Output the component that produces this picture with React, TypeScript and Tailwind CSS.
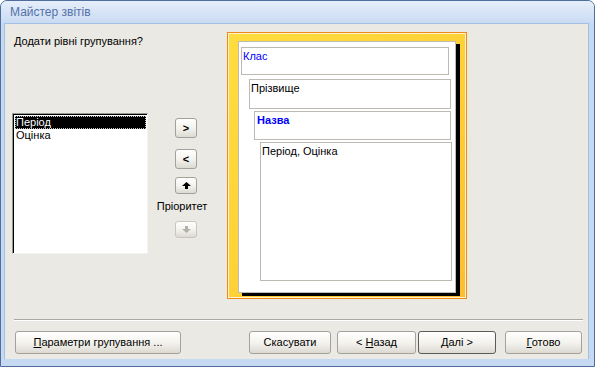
import React from "react";

function Btn({
  children,
  className = "",
  def = false,
  disabled = false,
}: {
  children: React.ReactNode;
  className?: string;
  def?: boolean;
  disabled?: boolean;
}) {
  const border = def
    ? "border-[#5c5b57]"
    : disabled
    ? "border-[#c9c6bd]"
    : "border-[#a3a19a]";
  return (
    <button
      className={`flex items-center justify-center rounded-[3px] border ${border} bg-gradient-to-b from-[#ffffff] via-[#f4f3ee] to-[#dcdad2] text-[11px] leading-none ${
        disabled ? "text-[#aca899]" : "text-black"
      } ${className}`}
    >
      {children}
    </button>
  );
}

function Arrow({ up = true, color = "#000" }: { up?: boolean; color?: string }) {
  return (
    <svg width="9" height="7" viewBox="0 0 9 7">
      <polygon
        points={up ? "4.5,0 9,4 6,4 6,7 3,7 3,4 0,4" : "3,0 6,0 6,3 9,3 4.5,7 0,3 3,3"}
        fill={color}
      />
    </svg>
  );
}

export default function App() {
  return (
    <div className="w-[595px] h-[367px] bg-[#c6d9f2] border border-[#4f6e9c] rounded-t-[7px] flex flex-col overflow-hidden font-['Liberation_Sans',Arial,sans-serif]">
      {/* title bar */}
      <div className="h-[22px] shrink-0 bg-gradient-to-b from-[#e6eefa] to-[#c9dbf3] flex items-center pl-[9px]">
        <span className="text-[12px] text-[#5472a8]">Майстер звітів</span>
      </div>

      <div className="flex-1 mx-[3px] mr-[5px] mb-[7px] bg-[#ebe9e3] border-t border-l border-r border-[#a4bfe4] flex flex-col">
        {/* main area */}
        <div className="h-[295px] flex items-start pt-[8px]">
          <div className="w-[136px] ml-[7px] flex flex-col">
            <div className="pl-[2px] mt-[3px] text-[11px] leading-[13px] text-black">
              Додати рівні групування?
            </div>
            <div className="mt-[65px] h-[141px] bg-white border border-t-[#9a9892] border-l-[#9a9892] border-r-[#f4f3ef] border-b-[#f4f3ef]">
              <div className="h-full border-t border-l border-black pt-[1px] pl-[1px] pr-[1px]">
                <div className="h-[13px] bg-black text-white text-[11px] leading-[12px] pl-[1px] outline outline-1 outline-dotted outline-[#c0c0c0] -outline-offset-1">
                  Період
                </div>
                <div className="h-[13px] text-black text-[11px] leading-[13px] pl-[1px]">
                  Оцінка
                </div>
              </div>
            </div>
          </div>

          <div className="w-[76px] pt-[86px] flex flex-col items-center">
            <Btn className="w-[22px] h-[20px] font-bold">&gt;</Btn>
            <Btn className="w-[22px] h-[20px] mt-[11px] font-bold">&lt;</Btn>
            <Btn className="w-[22px] h-[17px] mt-[8px]">
              <Arrow />
            </Btn>
            <div className="mt-[6px] text-[11px] leading-[13px] text-black -ml-[8px]">
              Пріоритет
            </div>
            <Btn disabled className="w-[22px] h-[17px] mt-[8px]">
              <Arrow up={false} color="#b2b0a8" />
            </Btn>
          </div>

          {/* preview */}
          <div className="ml-[3px] w-[240px] h-[267px] border border-[#f08a17]">
            <div className="h-full border border-[#fff3cf] bg-gradient-to-br from-[#ffdd3e] via-[#fed236] to-[#fcbf2e] pl-[9px] pt-[7px]">
              <div className="w-[218px] h-[252px] bg-white border border-[#bdbbb6] shadow-[4px_3px_0_#000] text-[11px] leading-[13px]">
                <div className="ml-[2px] mt-[5px] w-[208px] h-[28px] border border-[#bdbab3] px-[1px] pt-[2px] text-[#0000ff]">
                  Клас
                </div>
                <div className="ml-[10px] mt-[4px] w-[202px] h-[30px] border border-[#bdbab3] px-[1px] pt-[2px] text-black">
                  Прізвище
                </div>
                <div className="ml-[15px] mt-[2px] w-[197px] h-[29px] border border-[#bdbab3] px-[2px] pt-[2px] text-[#0000ff] font-bold">
                  Назва
                </div>
                <div className="ml-[21px] mt-[2px] w-[192px] h-[139px] border border-[#bdbab3] px-[1px] pt-[2px] text-black">
                  Період, Оцінка
                </div>
              </div>
            </div>
          </div>
        </div>

        {/* separator */}
        <div className="ml-[9px] mr-[5px] h-[2px] border-t border-[#a9a79f] border-b border-b-white" />

        {/* bottom buttons */}
        <div className="flex items-center mt-[10px]">
          <Btn className="ml-[10px] w-[166px] h-[23px]">
            <span>
              <span className="underline">П</span>араметри групування ...
            </span>
          </Btn>
          <Btn className="ml-[68px] w-[82px] h-[23px]">Скасувати</Btn>
          <Btn className="ml-[6px] w-[79px] h-[23px]">
            <span>
              &lt; <span className="underline">Н</span>азад
            </span>
          </Btn>
          <Btn def className="ml-[2px] w-[78px] h-[23px]">
            <span>
              <span className="underline">Д</span>алі &gt;
            </span>
          </Btn>
          <Btn className="ml-[9px] w-[77px] h-[23px]">
            <span>
              <span className="underline">Г</span>отово
            </span>
          </Btn>
        </div>
      </div>
    </div>
  );
}
